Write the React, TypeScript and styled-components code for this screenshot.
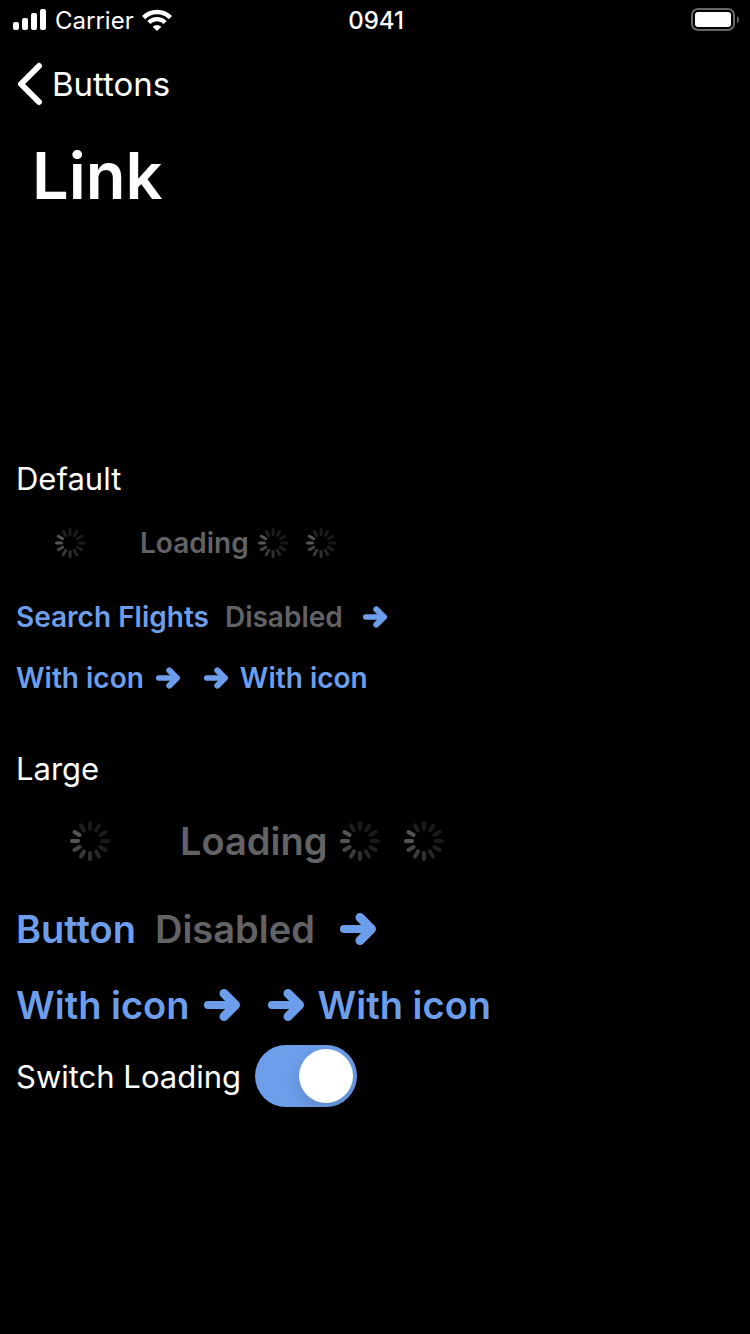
import React, { useState } from 'react';
import styled, { createGlobalStyle } from 'styled-components';

const GlobalStyle = createGlobalStyle`
  * { box-sizing: border-box; }
  body { margin: 0; background: #000; }
`;

const Screen = styled.div`
  min-height: 100vh;
  background: #000;
  color: #fff;
  font-family: Inter, "Liberation Sans", sans-serif;
`;

const StatusBar = styled.div`
  display: grid;
  grid-template-columns: 1fr auto 1fr;
  align-items: center;
  height: 40px;
  padding: 0 11px 0 13px;
  font-size: 24px;
`;

const Carrier = styled.div`
  display: flex;
  align-items: center;
  gap: 8px;
`;

const Clock = styled.time`
  font-weight: 500;
`;

const Power = styled.div`
  display: flex;
  justify-content: flex-end;
`;

const NavBar = styled.nav`
  display: flex;
  align-items: center;
  height: 88px;
  padding: 0 16px;
`;

const BackLink = styled.a`
  display: flex;
  align-items: center;
  gap: 8px;
  color: #fff;
  font-size: 33px;
  text-decoration: none;
`;

const Title = styled.h1`
  margin: 0;
  padding: 8px 32px;
  font-size: 65px;
  line-height: 80px;
  font-weight: 600;
`;

const Content = styled.main`
  padding: 235px 16px 0;
`;

const Section = styled.section`
  & + & { margin-top: 40px; }
`;

const SectionLabel = styled.h2`
  margin: 0;
  font-size: 31px;
  line-height: 40px;
  font-weight: 400;
`;

const Row = styled.div<{ $height: number; $gap?: number }>`
  display: flex;
  align-items: center;
  gap: ${(p) => p.$gap ?? 16}px;
  min-height: ${(p) => p.$height}px;
`;

const LinkButton = styled.button<{ $large?: boolean; $placeholder?: boolean }>`
  display: inline-flex;
  align-items: center;
  justify-content: center;
  gap: 8px;
  min-width: ${(p) => (p.$placeholder ? (p.$large ? 148 : 108) : 0)}px;
  padding: 0;
  border: 0;
  background: none;
  color: #6d9eeb;
  font-family: inherit;
  font-size: ${(p) => (p.$large ? 38 : 28)}px;
  line-height: ${(p) => (p.$large ? 48 : 32)}px;
  font-weight: 600;
  &:disabled { color: #636366; }
`;

const Drawing = styled.svg`
  display: block;
  flex: none;
`;

const SwitchRow = styled.label`
  display: flex;
  align-items: center;
  gap: 14px;
  font-size: 31px;
`;

const Toggle = styled.input`
  appearance: none;
  display: flex;
  align-items: center;
  width: 102px;
  height: 62px;
  margin: 0;
  padding: 4px;
  border-radius: 31px;
  background: #39393d;
  &::before {
    content: "";
    width: 54px;
    height: 54px;
    border-radius: 50%;
    background: #fff;
    box-shadow: 0 6px 16px rgba(0, 0, 0, 0.15);
  }
  &:checked { justify-content: flex-end; background: #6d9eeb; }
`;

const spokes = ['#1a1a1b', '#1a1a1b', '#1a1a1b', '#1a1a1b', '#1f1f20', '#262627', '#303031', '#3a3a3c', '#464648', '#545457', '#545457', '#1f1f20'];

function Spinner({ large }: { large?: boolean }) {
  const size = large ? 48 : 32;
  const reach = large ? 20 : 15;
  const length = large ? 10 : 8;
  const width = large ? 4 : 3;
  return (
    <Drawing width={size} height={size} viewBox={`${-size / 2} ${-size / 2} ${size} ${size}`} aria-hidden="true">
      {spokes.map((fill, i) => (
        <rect key={i} x={-width / 2} y={-reach} width={width} height={length} rx={width / 2} fill={fill} transform={`rotate(${i * 30})`} />
      ))}
    </Drawing>
  );
}

function Arrow({ large }: { large?: boolean }) {
  const size = large ? 48 : 32;
  return (
    <Drawing width={size} height={size} viewBox="0 0 48 48" fill="none" stroke="currentColor" strokeLinecap="round" strokeLinejoin="round" aria-hidden="true">
      <path d="M10 24H36" strokeWidth="8" />
      <path d="M26 12.500L37.500 24L26 35.500" strokeWidth="9" />
    </Drawing>
  );
}

function LinkGroup({ label, action, large, loading }: { label: string; action: string; large?: boolean; loading: boolean }) {
  const heights = large ? [104, 72, 80] : [88, 60, 62];
  return (
    <Section>
      <SectionLabel>{label}</SectionLabel>
      <Row $height={heights[0]}>
        <LinkButton $large={large} $placeholder disabled={loading} aria-label="Loading link">{loading ? <Spinner large={large} /> : 'Button'}</LinkButton>
        <LinkButton $large={large} disabled={loading}>Loading{loading && <Spinner large={large} />}</LinkButton>
        <LinkButton $large={large} disabled={loading} aria-label="Loading icon">{loading ? <Spinner large={large} /> : <Arrow large={large} />}</LinkButton>
      </Row>
      <Row $height={heights[1]} $gap={large ? 19 : 16}>
        <LinkButton $large={large}>{action}</LinkButton>
        <LinkButton $large={large} disabled>Disabled</LinkButton>
        <LinkButton $large={large} aria-label="Continue"><Arrow large={large} /></LinkButton>
      </Row>
      <Row $height={heights[2]}>
        <LinkButton $large={large}>With icon<Arrow large={large} /></LinkButton>
        <LinkButton $large={large}><Arrow large={large} />With icon</LinkButton>
      </Row>
    </Section>
  );
}

export default function App() {
  const [loading, setLoading] = useState(true);
  return (
    <Screen>
      <GlobalStyle />
      <StatusBar>
        <Carrier>
          <Drawing width="34" height="22" viewBox="0 0 34 22" fill="#fff" aria-hidden="true">
            <rect x="0" y="13" width="6" height="8" rx="2" />
            <rect x="9" y="9" width="6" height="12" rx="2" />
            <rect x="18" y="4" width="6" height="17" rx="2" />
            <rect x="27" y="0" width="6" height="21" rx="2" />
          </Drawing>
          Carrier
          <Drawing width="30" height="22" viewBox="0 0 30 22" aria-hidden="true">
            <g fill="none" stroke="#fff">
              <path d="M1.600 8.600A19 19 0 0 1 28.400 8.600" strokeWidth="4.600" />
              <path d="M6.800 13.400A11.700 11.700 0 0 1 23.200 13.400" strokeWidth="4.200" />
            </g>
            <path fill="#fff" d="M15 22L10.600 17.800Q15 14.400 19.400 17.800Z" />
          </Drawing>
        </Carrier>
        <Clock>0941</Clock>
        <Power>
          <Drawing width="48" height="24" viewBox="0 0 48 24" aria-hidden="true">
            <rect x="1" y="1" width="42" height="21" rx="6" fill="none" stroke="#666" strokeWidth="2" />
            <rect x="4" y="4" width="36" height="15" rx="3" fill="#fff" />
            <path d="M46 8Q48 9 48 11.500Q48 14 46 15Z" fill="#666" />
          </Drawing>
        </Power>
      </StatusBar>
      <NavBar>
        <BackLink href="#buttons">
          <Drawing width="28" height="44" viewBox="0 0 28 44" fill="none" stroke="#fff" strokeWidth="6" strokeLinecap="round" strokeLinejoin="round" aria-hidden="true">
            <path d="M23 4L5 22L23 40" />
          </Drawing>
          Buttons
        </BackLink>
      </NavBar>
      <Title>Link</Title>
      <Content>
        <LinkGroup label="Default" action="Search Flights" loading={loading} />
        <LinkGroup label="Large" action="Button" large loading={loading} />
        <SwitchRow>
          Switch Loading
          <Toggle type="checkbox" role="switch" checked={loading} onChange={(e) => setLoading(e.target.checked)} />
        </SwitchRow>
      </Content>
    </Screen>
  );
}
